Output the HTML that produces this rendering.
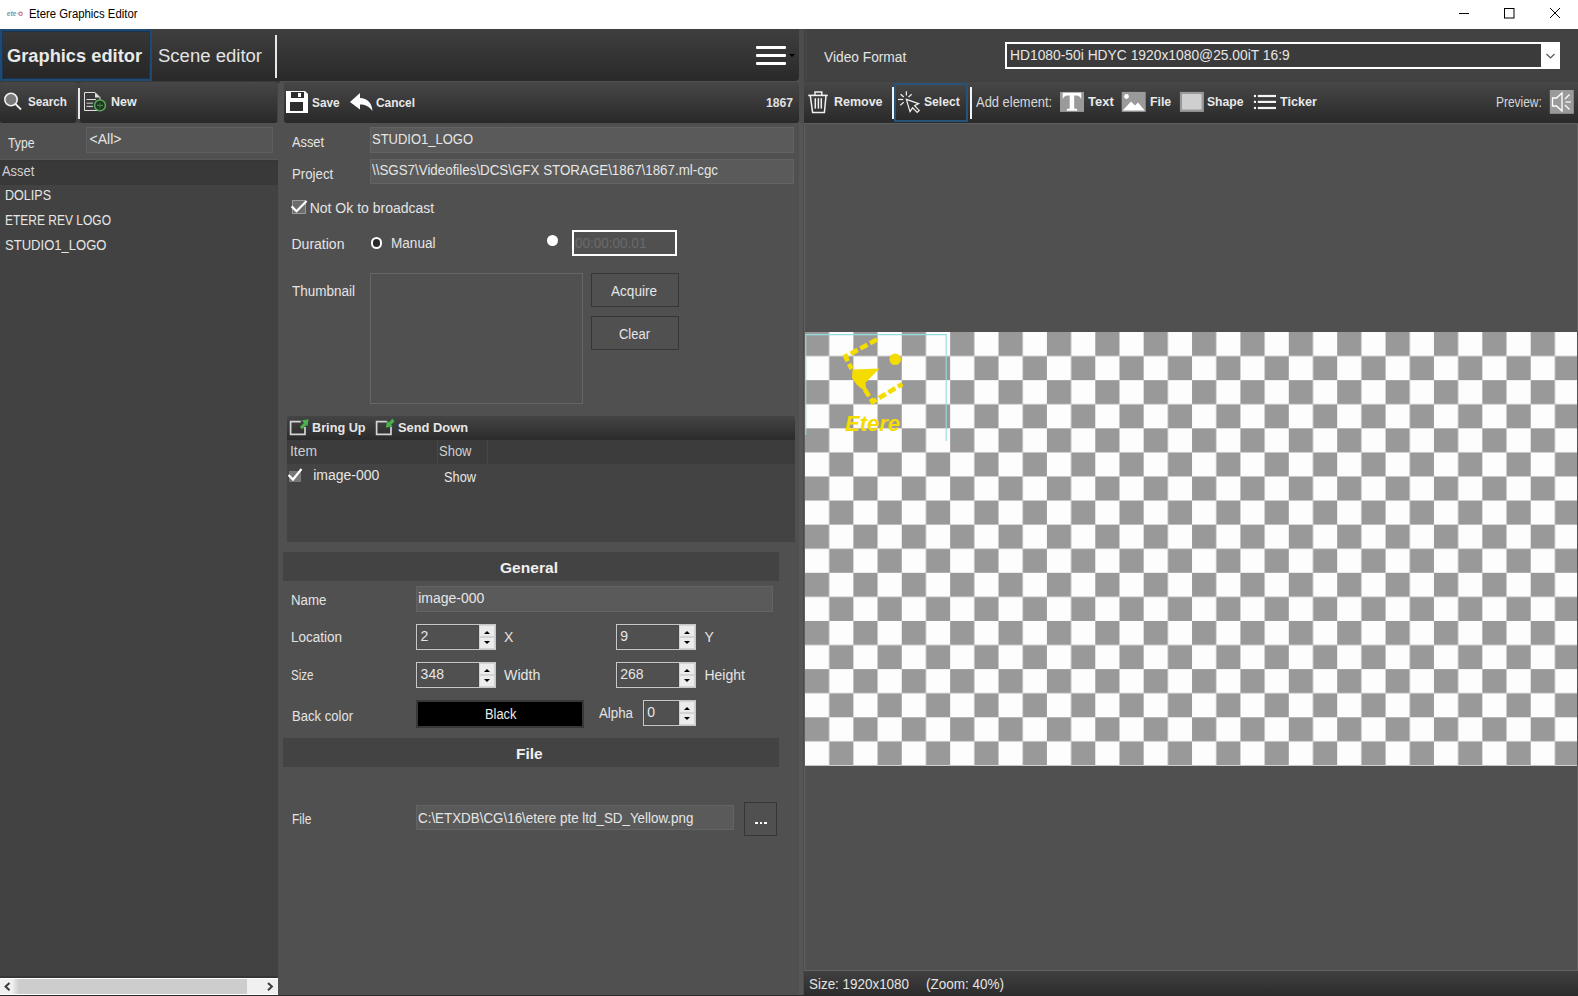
<!DOCTYPE html>
<html><head><meta charset="utf-8"><style>
html,body{margin:0;padding:0;}
body{width:1578px;height:996px;overflow:hidden;position:relative;background:#505050;font-family:"Liberation Sans",sans-serif;}
.a{position:absolute;box-sizing:border-box;}
.t{position:absolute;white-space:pre;line-height:1;transform-origin:0 0;font-family:"Liberation Sans",sans-serif;}
.hdr{background:linear-gradient(#3f3f3f,#292929);}
.tb{background:linear-gradient(#474747,#292929);border-radius:3px;}
.inp{background:#5a5a5a;border:1px solid #636363;}
.btn{background:#505050;border:1px solid #363636;}
.spin{background:#505050;border:1px solid #c8c8c8;}
.spin .in{position:absolute;left:0;top:0;right:16px;bottom:0;border:1px solid #4a4a4a;}
.spin .up,.spin .dn{position:absolute;right:0;width:16px;background:#ececec;border:1px solid #d4d4d4;box-sizing:border-box;}
.spin .up{top:0;height:50%;}
.spin .dn{bottom:0;height:50%;}
.tri-u{position:absolute;left:3.5px;top:5px;width:0;height:0;border-left:3px solid transparent;border-right:3px solid transparent;border-bottom:3.5px solid #000;}
.tri-d{position:absolute;left:3.5px;top:2.5px;width:0;height:0;border-left:3px solid transparent;border-right:3px solid transparent;border-top:3.5px solid #000;}

</style></head><body>
<!-- title bar -->
<div class="a" style="left:0;top:0;width:1578px;height:29px;background:#fff"></div>
<svg class="a" style="left:0;top:0" width="1578" height="29">
  <text x="6.8" y="16" font-family="Liberation Sans" font-size="6.5" font-weight="bold" fill="#6a9cc0" font-style="italic">ete</text><line x1="17" y1="13.6" x2="18.6" y2="13.6" stroke="#8ab" stroke-width="0.8"/><circle cx="20.6" cy="13.8" r="1.7" fill="none" stroke="#c07a98" stroke-width="1.1"/>
  <line x1="1459" y1="13.5" x2="1469" y2="13.5" stroke="#000" stroke-width="1"/>
  <rect x="1504.5" y="8.5" width="9.5" height="9.5" fill="none" stroke="#000" stroke-width="1"/>
  <line x1="1550" y1="8" x2="1560" y2="18" stroke="#000" stroke-width="1"/>
  <line x1="1560" y1="8" x2="1550" y2="18" stroke="#000" stroke-width="1"/>
</svg>

<!-- left panel -->
<div class="a" style="left:0;top:29px;width:278px;height:967px;background:#424242"></div>
<!-- header bar left+middle -->
<div class="a hdr" style="left:0;top:29px;width:799px;height:52px;border-radius:0 0 4px 0"></div>
<div class="a" style="left:0;top:29px;width:151.5px;height:51.5px;border:2px solid #1f4b72;background:linear-gradient(#373737,#262626);box-shadow:inset 0 0 0 1px #1b3550"></div>
<div class="a" style="left:275px;top:35px;width:2px;height:43px;background:#e8e8e8"></div>
<!-- hamburger -->
<div class="a" style="left:756px;top:45.5px;width:30px;height:3px;background:#fff;border-radius:1px"></div>
<div class="a" style="left:756px;top:53.5px;width:30px;height:3px;background:#fff;border-radius:1px"></div>
<div class="a" style="left:756px;top:61.5px;width:30px;height:3px;background:#fff;border-radius:1px"></div>
<div class="a" style="left:789px;top:54px;width:0;height:0;border-left:3px solid transparent;border-right:3px solid transparent;border-top:3px solid #000"></div>

<!-- left toolbar -->
<div class="a" style="left:0;top:81px;width:280px;height:2px;background:#3a3a3a"></div>
<div class="a tb" style="left:0;top:82px;width:76px;height:41px"></div>
<div class="a tb" style="left:80px;top:82px;width:197px;height:41px"></div>
<div class="a" style="left:78px;top:88px;width:2px;height:31px;background:#e8e8e8"></div>
<svg class="a" style="left:0;top:82px" width="140" height="41">
  <circle cx="11" cy="17.5" r="6.2" fill="#7a7a7a" stroke="#f0f0f0" stroke-width="1.6"/>
  <line x1="15.5" y1="22" x2="21" y2="27.5" stroke="#f0f0f0" stroke-width="1.8"/>
  <path d="M84.5 10.5 H95 L100 15.5 V28.5 H84.5 Z" fill="#3a3a3a" stroke="#e0e0e0" stroke-width="1"/>
  <path d="M95 10.5 V15.5 H100 Z" fill="#e0e0e0"/>
  <line x1="86.5" y1="17.5" x2="96" y2="17.5" stroke="#ddd" stroke-width="1"/>
  <line x1="86.5" y1="21.2" x2="93" y2="21.2" stroke="#ccc" stroke-width="1"/>
  <line x1="86.5" y1="24.4" x2="93" y2="24.4" stroke="#ddd" stroke-width="1"/>
  <circle cx="100" cy="23.4" r="5.4" fill="#1e361e" stroke="#5aa85a" stroke-width="1.5"/>
  <line x1="97" y1="23.4" x2="103" y2="23.4" stroke="#4a8a4a" stroke-width="1.2"/>
  <line x1="100" y1="20.4" x2="100" y2="26.4" stroke="#3a6a3a" stroke-width="1.2"/>
</svg>

<!-- left type row -->
<div class="a" style="left:0;top:123px;width:279px;height:37px;background:#505050"></div><div class="a" style="left:0;top:159px;width:278px;height:1px;background:#575757"></div>
<div class="a inp" style="left:86px;top:127px;width:187px;height:26px;background:#555;border-color:#5f5f5f"></div>
<div class="a" style="left:0;top:160px;width:278px;height:24.5px;background:linear-gradient(#363636,#393939 3px,#393939)"></div>
<!-- left scrollbar -->
<div class="a" style="left:0;top:976px;width:278px;height:2px;background:linear-gradient(#3a3a3a,#303030)"></div>
<div class="a" style="left:0;top:978px;width:278px;height:17px;background:#f0f0f0;border-top:1px solid #fff;border-bottom:1px solid #fff"></div>
<div class="a" style="left:13px;top:979px;width:234px;height:15px;background:linear-gradient(90deg,#eaeaea,#cdcdcd 6px,#cdcdcd)"></div>
<svg class="a" style="left:0;top:978px" width="278" height="17">
  <path d="M9.5 5 L5.6 8.6 L9.5 12.2" fill="none" stroke="#3c3c3c" stroke-width="2"/>
  <path d="M268 5 L271.9 8.6 L268 12.2" fill="none" stroke="#3c3c3c" stroke-width="2"/>
</svg>
<div class="a" style="left:0;top:995px;width:278px;height:1px;background:#2e2e2e"></div>

<!-- middle toolbar -->
<div class="a tb" style="left:284px;top:82px;width:515px;height:40.5px"></div>
<svg class="a" style="left:283px;top:82px" width="516" height="41">
  <path d="M3 9 H22 L25 12 V31 H3 Z" fill="#fff"/>
  <rect x="8" y="10" width="13" height="6" fill="#2d2d2d"/>
  <rect x="15" y="11" width="3" height="4" fill="#fff"/>
  <rect x="7" y="20" width="13" height="9" fill="#2d2d2d"/>
  <path d="M67 20 L77 11 L77 16 C84 16 89 21 89.5 29 C86 24 82 22.5 77 22.5 L77 27.5 Z" fill="#fff"/>
</svg>

<!-- splitter & right header -->
<div class="a" style="left:799px;top:29px;width:7px;height:94px;background:#4d4d4d"></div><div class="a" style="left:799px;top:123px;width:4px;height:873px;background:#565656"></div><div class="a" style="left:803px;top:123px;width:1px;height:873px;background:#4b4b4b"></div>
<div class="a" style="left:804px;top:29px;width:1px;height:52px;background:#3e3e3e"></div><div class="a" style="left:805px;top:29px;width:2px;height:52px;background:#474747"></div><div class="a" style="left:807px;top:29px;width:771px;height:52px;background:#424242"></div>
<!-- combo -->
<div class="a" style="left:1004.5px;top:42px;width:555.5px;height:27px;border:2px solid #fff;background:#3b3b3b"></div>
<div class="a" style="left:1540.5px;top:42px;width:19.5px;height:27px;background:#fff"></div>
<svg class="a" style="left:1540px;top:42px" width="20" height="27">
  <path d="M6.5 12 L10.5 16 L14.5 12" fill="none" stroke="#555" stroke-width="1.2"/>
</svg>

<!-- right toolbar -->
<div class="a" style="left:804px;top:81px;width:774px;height:1px;background:#404040"></div><div class="a" style="left:804px;top:82px;width:774px;height:41px;background:linear-gradient(#474747,#292929)"></div>
<div class="a tb" style="left:804px;top:82px;width:85px;height:41px"></div>
<div class="a" style="left:892px;top:87px;width:2px;height:31.6px;background:#eef4f8"></div>
<div class="a" style="left:894px;top:82.7px;width:74px;height:39px;border:2px solid #275378;background:linear-gradient(#444,#292929)"></div>
<div class="a" style="left:970px;top:87px;width:2px;height:31.6px;background:#eef4f8"></div>
<svg class="a" style="left:804px;top:82px" width="774" height="41">
  <!-- trash -->
  <path d="M4.2 13.4 H23.8" stroke="#f0f0f0" stroke-width="1.6"/>
  <path d="M11 13.2 V10 H17.8 V13.2" fill="none" stroke="#f0f0f0" stroke-width="1.5"/>
  <path d="M6.3 13.6 L8.6 30.6 H20.4 L22 13.6" fill="none" stroke="#f0f0f0" stroke-width="1.5"/>
  <line x1="11.3" y1="16.2" x2="11.3" y2="26.6" stroke="#f0f0f0" stroke-width="1.5"/>
  <line x1="14.4" y1="16.2" x2="14.4" y2="26.6" stroke="#f0f0f0" stroke-width="1.5"/>
  <line x1="17.3" y1="16.2" x2="17.3" y2="26.6" stroke="#f0f0f0" stroke-width="1.5"/>
  <!-- select cursor -->
  <path d="M102.4 17.4 L114.6 21.6 L110.6 23.6 L115.2 28.4 L113.2 30.4 L108.6 25.8 L106 29.6 Z" fill="none" stroke="#f0f0f0" stroke-width="1.2" stroke-linejoin="miter"/>
  <g stroke="#f0f0f0" stroke-width="1.2">
  <line x1="102.4" y1="9.2" x2="102.4" y2="13.4"/>
  <line x1="94" y1="17.5" x2="99.2" y2="17.5"/>
  <line x1="96.6" y1="12.2" x2="99.8" y2="15"/>
  <line x1="104.5" y1="15" x2="107.7" y2="12.2"/>
  <line x1="96.3" y1="23.2" x2="99.8" y2="20.1"/>
  </g>
  <!-- text icon -->
  <rect x="256" y="9.9" width="24" height="20" fill="#9a9a9a"/>
  <path d="M258.7 10.8 H277.2 V17 C276 14.5 274.5 13.5 272 13.5 H270.2 V26.8 H273.1 V28.8 H262.9 V26.8 H265.7 V13.5 H264 C261.5 13.5 260 14.5 258.7 17 Z" fill="#fff"/>
  <!-- file icon -->
  <rect x="317.7" y="9.9" width="24" height="20" fill="#9a9a9a"/>
  <circle cx="322.5" cy="14.5" r="2.4" fill="#fff"/>
  <path d="M318.7 28.5 L327 19.5 L331 23.5 L334 20.5 L340.7 28.5 Z" fill="#fff"/>
  <!-- shape icon -->
  <rect x="375.9" y="9.9" width="24" height="20" fill="#9a9a9a"/>
  <rect x="378" y="12" width="19.5" height="15.5" fill="#cfcfcf" rx="1"/>
  <!-- ticker icon -->
  <g stroke="#f4f4f4" stroke-width="2.2">
    <line x1="453.8" y1="14" x2="472" y2="14"/>
    <line x1="453.8" y1="19.9" x2="472" y2="19.9"/>
    <line x1="453.8" y1="26" x2="472" y2="26"/>
    <line x1="449.9" y1="14" x2="452" y2="14"/>
    <line x1="449.9" y1="19.9" x2="452" y2="19.9"/>
    <line x1="449.9" y1="26" x2="452" y2="26"/>
  </g>
  <!-- speaker -->
  <rect x="745.8" y="8" width="24" height="23.8" fill="#9a9a9a"/>
  <path d="M748.5 16 H752.5 L758 11 V29 L752.5 24 H748.5 Z" fill="none" stroke="#fff" stroke-width="1.3"/>
  <line x1="761" y1="17" x2="765.5" y2="12.5" stroke="#fff" stroke-width="1.2"/>
  <line x1="761.5" y1="20" x2="767" y2="20" stroke="#fff" stroke-width="1.2"/>
  <line x1="761" y1="23" x2="765.5" y2="27.5" stroke="#fff" stroke-width="1.2"/>
</svg>

<!-- canvas area -->
<div class="a" style="left:804px;top:123px;width:774px;height:847px;background:#505050;border-left:1px solid #606060;border-top:1px solid #5e5e5e"></div>
<svg class="a" style="left:805px;top:332px" width="773" height="434">
  <defs>
    <pattern id="chk" patternUnits="userSpaceOnUse" width="48.38" height="48.16">
      <rect width="48.38" height="48.16" fill="#fdfdfd"/>
      <rect x="0" y="0" width="24.19" height="24.08" fill="#999"/>
      <rect x="24.19" y="24.08" width="24.19" height="24.08" fill="#999"/>
    </pattern>
  </defs>
  <rect width="773" height="434" fill="url(#chk)"/>
  <!-- selection -->
  <path d="M0.8 103 V2.6 H141.2 V109" fill="none" stroke="#96dcdc" stroke-width="1.1"/>
  <!-- logo -->
  <g fill="#f5dc00">
    <circle cx="90.2" cy="27.3" r="5.8"/>
    <path d="M74.5 36.5 L47.5 37.5 L47 46 L52 53 L61.5 60.5 L60.5 50.5 Z"/>
  </g>
  <g stroke="#f5dc00" stroke-width="4.6" fill="none" stroke-dasharray="8 3">
    <path d="M72 7.4 L40.5 24.5 L46.6 37"/>
    <path d="M59.8 57.5 L67.6 69.8 L97.4 52.1"/>
  </g>
  <text x="40" y="99" font-family="Liberation Sans" font-weight="bold" font-style="italic" font-size="22" fill="#f5dc00">Etere</text>
</svg>
<div class="a" style="left:1577px;top:124px;width:1px;height:846px;background:#626262"></div>
<div class="a" style="left:1577px;top:332px;width:1px;height:434px;background:#505050"></div>
<!-- status bar -->
<div class="a" style="left:804px;top:970px;width:774px;height:1px;background:#626262"></div>
<div class="a" style="left:804px;top:971px;width:774px;height:25px;background:linear-gradient(#404040,#2c2c2c)"></div>
<!-- middle form -->
<div class="a inp" style="left:370px;top:127px;width:424px;height:26px"></div>
<div class="a inp" style="left:370px;top:158.5px;width:424px;height:25px"></div>
<!-- checkbox -->
<div class="a" style="left:292px;top:200.4px;width:14px;height:13.4px;background:#6c6c6c;border:1px solid #9a9a9a"></div>
<svg class="a" style="left:288px;top:196px" width="24" height="22">
  <path d="M3.6 10.4 L8.5 15.3 L18.6 5" fill="none" stroke="#fff" stroke-width="2.2"/>
</svg>
<!-- radio -->
<div class="a" style="left:370.6px;top:237px;width:11.6px;height:11.6px;border-radius:50%;background:#2a2a2a;border:2.3px solid #fff"></div>
<div class="a" style="left:547px;top:235px;width:11.2px;height:11.2px;border-radius:50%;background:#fff"></div>
<!-- time box -->
<div class="a" style="left:572px;top:230px;width:105px;height:26px;border:2px solid #fff;background:#505050"></div>
<!-- thumbnail -->
<div class="a" style="left:370px;top:273px;width:213px;height:131px;border:1px solid #666;background:#505050"></div>
<div class="a btn" style="left:591px;top:273px;width:88px;height:33.5px"></div>
<div class="a btn" style="left:591px;top:316px;width:88px;height:33.5px"></div>
<!-- layers toolbar & table -->
<div class="a" style="left:287px;top:416px;width:508px;height:24px;background:linear-gradient(#444,#2b2b2b);border-radius:3px 3px 0 0"></div>
<svg class="a" style="left:287px;top:414px" width="200" height="26">
  <path d="M13.8 7.6 H3.6 V20.4 H18 V13" fill="none" stroke="#d4d4d4" stroke-width="1.7"/>
  <path d="M14 14.2 L18.5 9.7" stroke="#4cb04c" stroke-width="3.2"/>
  <path d="M21.6 5.2 L14.6 6.4 L20.4 12.2 Z" fill="#4cb04c"/>
  <path d="M99.8 7.6 H89.6 V20.4 H104 V13" fill="none" stroke="#d4d4d4" stroke-width="1.7"/>
  <path d="M101.5 11 L106.5 6" stroke="#4cb04c" stroke-width="3.2"/>
  <path d="M98.8 13.6 L100 6.6 L105.8 12.4 Z" fill="#4cb04c"/>
</svg>
<div class="a" style="left:287px;top:440px;width:508px;height:24px;background:#3c3c3c"></div>
<div class="a" style="left:437px;top:440px;width:1px;height:24px;background:#474747"></div>
<div class="a" style="left:486.5px;top:440px;width:1px;height:24px;background:#474747"></div>
<div class="a" style="left:287px;top:464px;width:508px;height:77.5px;background:#434343"></div>
<div class="a" style="left:289px;top:470.5px;width:12px;height:11px;background:#777"></div>
<svg class="a" style="left:286px;top:464px" width="24" height="22">
  <path d="M2.5 11 L7 15.5 L15.5 5" fill="none" stroke="#fff" stroke-width="2.2"/>
</svg>
<!-- general -->
<div class="a" style="left:283px;top:552px;width:496px;height:29px;background:#434343"></div>
<div class="a inp" style="left:416px;top:586px;width:357px;height:25.5px"></div>

<div class="a spin" style="left:416px;top:624px;width:80px;height:26px"><div class="in"></div><div class="up"><div class="tri-u"></div></div><div class="dn"><div class="tri-d"></div></div></div>
<div class="a spin" style="left:616px;top:624px;width:80px;height:26px"><div class="in"></div><div class="up"><div class="tri-u"></div></div><div class="dn"><div class="tri-d"></div></div></div>
<div class="a spin" style="left:416px;top:662px;width:80px;height:26px"><div class="in"></div><div class="up"><div class="tri-u"></div></div><div class="dn"><div class="tri-d"></div></div></div>
<div class="a spin" style="left:616px;top:662px;width:80px;height:26px"><div class="in"></div><div class="up"><div class="tri-u"></div></div><div class="dn"><div class="tri-d"></div></div></div>
<div class="a spin" style="left:643px;top:700px;width:53px;height:26px"><div class="in"></div><div class="up"><div class="tri-u"></div></div><div class="dn"><div class="tri-d"></div></div></div>

<div class="a" style="left:416px;top:700px;width:168px;height:28px;background:#000;border:2px solid #383838"></div>
<!-- file -->
<div class="a" style="left:283px;top:738px;width:496px;height:29px;background:#434343"></div>
<div class="a inp" style="left:416px;top:805px;width:318px;height:25px"></div>
<div class="a btn" style="left:744px;top:802px;width:33px;height:34px"></div>
<div class="a" style="left:755px;top:821.5px;width:2.5px;height:2.5px;background:#fff"></div>
<div class="a" style="left:759.5px;top:821.5px;width:2.5px;height:2.5px;background:#fff"></div>
<div class="a" style="left:764px;top:821.5px;width:2.5px;height:2.5px;background:#fff"></div>

<div class="a" style="left:0;top:995px;width:1578px;height:1px;background:#2b2b2b"></div>

<div class="t" style="left:28.5px;top:7.79px;font-size:12px;font-weight:normal;color:#000000;transform:scaleX(0.9458);">Etere Graphics Editor</div>
<div class="t" style="left:7.1px;top:47.16px;font-size:18px;font-weight:bold;color:#e9e9e9;transform:scaleX(1.0148);">Graphics editor</div>
<div class="t" style="left:158.4px;top:47.16px;font-size:18px;font-weight:normal;color:#e4e4e4;transform:scaleX(1.0290);">Scene editor</div>
<div class="t" style="left:28.4px;top:95.42px;font-size:13.5px;font-weight:bold;color:#e8e8e8;transform:scaleX(0.8661);">Search</div>
<div class="t" style="left:111.0px;top:95.42px;font-size:13.5px;font-weight:bold;color:#e8e8e8;transform:scaleX(0.9223);">New</div>
<div class="t" style="left:8.0px;top:135.80px;font-size:14px;font-weight:normal;color:#e4e4e4;transform:scaleX(0.8764);">Type</div>
<div class="t" style="left:89.6px;top:132.30px;font-size:14px;font-weight:normal;color:#e4e4e4;">&lt;All&gt;</div>
<div class="t" style="left:1.5px;top:164.20px;font-size:14px;font-weight:normal;color:#d0d0d0;transform:scaleX(0.9225);">Asset</div>
<div class="t" style="left:5.0px;top:187.70px;font-size:14px;font-weight:normal;color:#e6e6e6;transform:scaleX(0.8977);">DOLIPS</div>
<div class="t" style="left:5.0px;top:213.30px;font-size:14px;font-weight:normal;color:#e6e6e6;transform:scaleX(0.8569);">ETERE REV LOGO</div>
<div class="t" style="left:5.0px;top:238.30px;font-size:14px;font-weight:normal;color:#e6e6e6;transform:scaleX(0.9319);">STUDIO1_LOGO</div>
<div class="t" style="left:312.2px;top:95.52px;font-size:13.5px;font-weight:bold;color:#e8e8e8;transform:scaleX(0.8754);">Save</div>
<div class="t" style="left:376.3px;top:95.52px;font-size:13.5px;font-weight:bold;color:#e8e8e8;transform:scaleX(0.8809);">Cancel</div>
<div class="t" style="left:765.8px;top:95.52px;font-size:13.5px;font-weight:bold;color:#e0e0e0;transform:scaleX(0.8990);">1867</div>
<div class="t" style="left:291.5px;top:135.00px;font-size:14px;font-weight:normal;color:#e4e4e4;transform:scaleX(0.9139);">Asset</div>
<div class="t" style="left:372.3px;top:132.20px;font-size:14px;font-weight:normal;color:#e6e6e6;transform:scaleX(0.9273);">STUDIO1_LOGO</div>
<div class="t" style="left:291.5px;top:166.80px;font-size:14px;font-weight:normal;color:#e4e4e4;transform:scaleX(0.9456);">Project</div>
<div class="t" style="left:372.3px;top:163.20px;font-size:14px;font-weight:normal;color:#e6e6e6;transform:scaleX(0.9535);">\\SGS7\Videofiles\DCS\GFX STORAGE\1867\1867.ml-cgc</div>
<div class="t" style="left:309.7px;top:201.10px;font-size:14px;font-weight:normal;color:#e4e4e4;">Not Ok to broadcast</div>
<div class="t" style="left:291.5px;top:236.80px;font-size:14px;font-weight:normal;color:#e4e4e4;">Duration</div>
<div class="t" style="left:390.7px;top:236.00px;font-size:14px;font-weight:normal;color:#e4e4e4;transform:scaleX(0.9691);">Manual</div>
<div class="t" style="left:575.3px;top:236.40px;font-size:14px;font-weight:normal;color:#6a6a6a;transform:scaleX(0.9654);">00:00:00.01</div>
<div class="t" style="left:291.6px;top:284.40px;font-size:14px;font-weight:normal;color:#e4e4e4;transform:scaleX(0.9638);">Thumbnail</div>
<div class="t" style="left:611.3px;top:283.50px;font-size:14px;font-weight:normal;color:#e6e6e6;transform:scaleX(0.9691);">Acquire</div>
<div class="t" style="left:619.3px;top:326.90px;font-size:14px;font-weight:normal;color:#e6e6e6;transform:scaleX(0.9266);">Clear</div>
<div class="t" style="left:312.3px;top:420.72px;font-size:13.5px;font-weight:bold;color:#e6e6e6;transform:scaleX(0.9405);">Bring Up</div>
<div class="t" style="left:398.0px;top:420.72px;font-size:13.5px;font-weight:bold;color:#e6e6e6;transform:scaleX(0.9524);">Send Down</div>
<div class="t" style="left:289.5px;top:444.00px;font-size:14px;font-weight:normal;color:#cfcfcf;transform:scaleX(0.9916);">Item</div>
<div class="t" style="left:439.4px;top:444.00px;font-size:14px;font-weight:normal;color:#cfcfcf;transform:scaleX(0.9280);">Show</div>
<div class="t" style="left:313.2px;top:468.30px;font-size:14px;font-weight:normal;color:#e6e6e6;">image-000</div>
<div class="t" style="left:443.8px;top:470.20px;font-size:14px;font-weight:normal;color:#e6e6e6;transform:scaleX(0.9138);">Show</div>
<div class="t" style="left:500.3px;top:559.60px;font-size:15px;font-weight:bold;color:#f0f0f0;transform:scaleX(1.0383);">General</div>
<div class="t" style="left:291.2px;top:593.30px;font-size:14px;font-weight:normal;color:#e4e4e4;transform:scaleX(0.9452);">Name</div>
<div class="t" style="left:418.2px;top:591.30px;font-size:14px;font-weight:normal;color:#e6e6e6;">image-000</div>
<div class="t" style="left:291.2px;top:630.30px;font-size:14px;font-weight:normal;color:#e4e4e4;transform:scaleX(0.9635);">Location</div>
<div class="t" style="left:420.6px;top:628.70px;font-size:14px;font-weight:normal;color:#e6e6e6;">2</div>
<div class="t" style="left:504.1px;top:630.30px;font-size:14px;font-weight:normal;color:#e4e4e4;">X</div>
<div class="t" style="left:620.2px;top:629.10px;font-size:14px;font-weight:normal;color:#e6e6e6;">9</div>
<div class="t" style="left:704.4px;top:630.30px;font-size:14px;font-weight:normal;color:#e4e4e4;">Y</div>
<div class="t" style="left:291.2px;top:668.10px;font-size:14px;font-weight:normal;color:#e4e4e4;transform:scaleX(0.8262);">Size</div>
<div class="t" style="left:420.6px;top:666.90px;font-size:14px;font-weight:normal;color:#e6e6e6;">348</div>
<div class="t" style="left:504.2px;top:668.10px;font-size:14px;font-weight:normal;color:#e4e4e4;transform:scaleX(1.0144);">Width</div>
<div class="t" style="left:620.2px;top:667.20px;font-size:14px;font-weight:normal;color:#e6e6e6;">268</div>
<div class="t" style="left:704.4px;top:668.30px;font-size:14px;font-weight:normal;color:#e4e4e4;">Height</div>
<div class="t" style="left:291.6px;top:708.70px;font-size:14px;font-weight:normal;color:#e4e4e4;transform:scaleX(0.9333);">Back color</div>
<div class="t" style="left:484.5px;top:707.30px;font-size:14px;font-weight:normal;color:#ececec;transform:scaleX(0.9172);">Black</div>
<div class="t" style="left:598.5px;top:706.10px;font-size:14px;font-weight:normal;color:#e4e4e4;transform:scaleX(0.9495);">Alpha</div>
<div class="t" style="left:647.3px;top:705.20px;font-size:14px;font-weight:normal;color:#e6e6e6;">0</div>
<div class="t" style="left:516.3px;top:745.80px;font-size:15px;font-weight:bold;color:#f0f0f0;transform:scaleX(1.0333);">File</div>
<div class="t" style="left:291.6px;top:812.20px;font-size:14px;font-weight:normal;color:#e4e4e4;transform:scaleX(0.8555);">File</div>
<div class="t" style="left:418.0px;top:811.20px;font-size:14px;font-weight:normal;color:#e6e6e6;transform:scaleX(0.9556);">C:\ETXDB\CG\16\etere pte ltd_SD_Yellow.png</div>
<div class="t" style="left:824.4px;top:50.20px;font-size:14px;font-weight:normal;color:#e4e4e4;transform:scaleX(0.9823);">Video Format</div>
<div class="t" style="left:1009.6px;top:48.30px;font-size:14px;font-weight:normal;color:#e6e6e6;transform:scaleX(0.9877);">HD1080-50i HDYC 1920x1080@25.00iT 16:9</div>
<div class="t" style="left:833.6px;top:95.22px;font-size:13.5px;font-weight:bold;color:#e8e8e8;transform:scaleX(0.9234);">Remove</div>
<div class="t" style="left:924.2px;top:95.22px;font-size:13.5px;font-weight:bold;color:#e8e8e8;transform:scaleX(0.9001);">Select</div>
<div class="t" style="left:976.4px;top:94.80px;font-size:14px;font-weight:normal;color:#d8d8d8;transform:scaleX(0.9237);">Add element:</div>
<div class="t" style="left:1087.5px;top:95.22px;font-size:13.5px;font-weight:bold;color:#e8e8e8;transform:scaleX(0.9643);">Text</div>
<div class="t" style="left:1149.6px;top:95.22px;font-size:13.5px;font-weight:bold;color:#e8e8e8;transform:scaleX(0.9116);">File</div>
<div class="t" style="left:1207.3px;top:95.22px;font-size:13.5px;font-weight:bold;color:#e8e8e8;transform:scaleX(0.9009);">Shape</div>
<div class="t" style="left:1279.8px;top:95.22px;font-size:13.5px;font-weight:bold;color:#e8e8e8;transform:scaleX(0.9360);">Ticker</div>
<div class="t" style="left:1495.6px;top:95.10px;font-size:14px;font-weight:normal;color:#d8d8d8;transform:scaleX(0.8532);">Preview:</div>
<div class="t" style="left:809.0px;top:977.00px;font-size:14px;font-weight:normal;color:#e4e4e4;transform:scaleX(0.9587);">Size: 1920x1080</div>
<div class="t" style="left:925.8px;top:977.00px;font-size:14px;font-weight:normal;color:#e4e4e4;transform:scaleX(0.9640);">(Zoom: 40%)</div>
</body></html>
